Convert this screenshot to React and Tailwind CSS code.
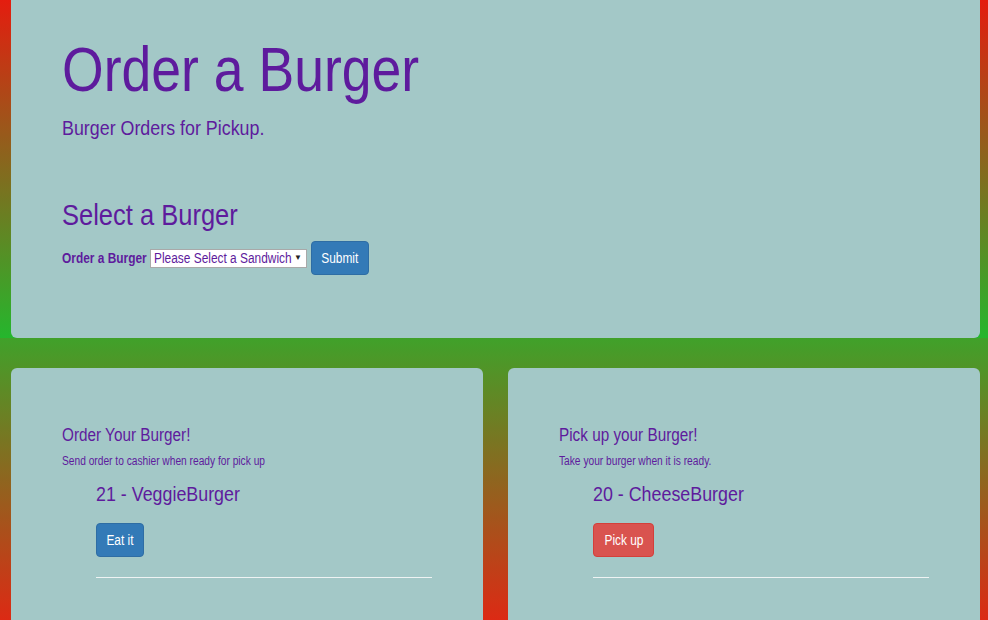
import { useState } from 'react';

const orders = [{ id: 21, burger_name: 'VeggieBurger' }];
const ready = [{ id: 20, burger_name: 'CheeseBurger' }];

const options = ['Please Select a Sandwich', 'VeggieBurger', 'CheeseBurger', 'BaconBurger'];

// the page text is narrow, squeeze it a bit
const narrow = 'inline-block whitespace-nowrap origin-left scale-x-[0.85]';

function Btn({ children, className }) {
  return (
    <button
      className={`flex items-center justify-center h-[34px] border rounded-[4px] text-white text-[14px] ${className}`}
    >
      <span className="inline-block whitespace-nowrap scale-x-[0.85]">{children}</span>
    </button>
  );
}

function OrderList({ title, subtitle, items, label, btnClass }) {
  return (
    <div className="flex-1 bg-[#a3c8c7] rounded-t-[6px] pt-[58px] pb-[60px] px-[51px]">
      <h4 className="text-[18px] leading-none">
        <span className={narrow}>{title}</span>
      </h4>
      <p className="text-[12px] leading-none mt-[11px]">
        <span className={narrow}>{subtitle}</span>
      </p>
      <ul className="ml-[34px]">
        {items.map((b) => (
          <li key={b.id}>
            <h3 className="text-[21px] leading-none mt-[16px]">
              <span className={narrow}>
                {b.id} - {b.burger_name}
              </span>
            </h3>
            <Btn className={`mt-[19px] ${btnClass}`}>{label}</Btn>
            <hr className="mt-[20px] border-t border-[#eef3f3]" />
          </li>
        ))}
      </ul>
    </div>
  );
}

export default function App() {
  const [burger, setBurger] = useState(0);

  return (
    <div className="min-h-screen text-[#5e1b9d] font-['Liberation_Sans',Arial,sans-serif]">
      {/* jumbotron */}
      <div className="pl-[11px] pr-[8px] bg-[linear-gradient(to_bottom,#e41d0f,#25b62d)]">
        <div className="h-[338px] bg-[#a3c8c7] rounded-b-[6px] pt-[38px] px-[51px]">
          <h1 className="text-[63px] leading-none">
            <span className={narrow}>Order a Burger</span>
          </h1>
          <p className="text-[21px] leading-none mt-[16px]">
            <span className={narrow}>Burger Orders for Pickup.</span>
          </p>
          <h2 className="text-[30px] leading-none mt-[62px]">
            <span className={narrow}>Select a Burger</span>
          </h2>
          <form className="flex items-center mt-[11px]" onSubmit={(e) => e.preventDefault()}>
            <label className="w-[88px] shrink-0 text-[14px] font-bold">
              <span className={narrow}>Order a Burger</span>
            </label>
            <div
              className="flex items-center w-[157px] h-[19px] bg-white border border-[#a9a9a9] pl-[3px] pr-[4px] text-[14px] leading-none cursor-default"
              onClick={() => setBurger((burger + 1) % options.length)}
            >
              <div className="flex-1 min-w-0">
                <span className={narrow}>{options[burger]}</span>
              </div>
              <span className="shrink-0 text-[8px] text-[#222]">▼</span>
            </div>
            <Btn className="ml-[4px] w-[58px] bg-[#337ab7] border-[#2e6da4]">Submit</Btn>
          </form>
        </div>
      </div>

      {/* orders */}
      <div className="flex gap-[25px] pl-[11px] pr-[8px] pt-[30px] bg-[linear-gradient(to_bottom,#40a12a_0px,#dc2a14_282px)]">
        <OrderList
          title="Order Your Burger!"
          subtitle="Send order to cashier when ready for pick up"
          items={orders}
          label="Eat it"
          btnClass="w-[48px] bg-[#337ab7] border-[#2e6da4]"
        />
        <OrderList
          title="Pick up your Burger!"
          subtitle="Take your burger when it is ready."
          items={ready}
          label="Pick up"
          btnClass="w-[61px] bg-[#d9534f] border-[#d43f3a]"
        />
      </div>
    </div>
  );
}
